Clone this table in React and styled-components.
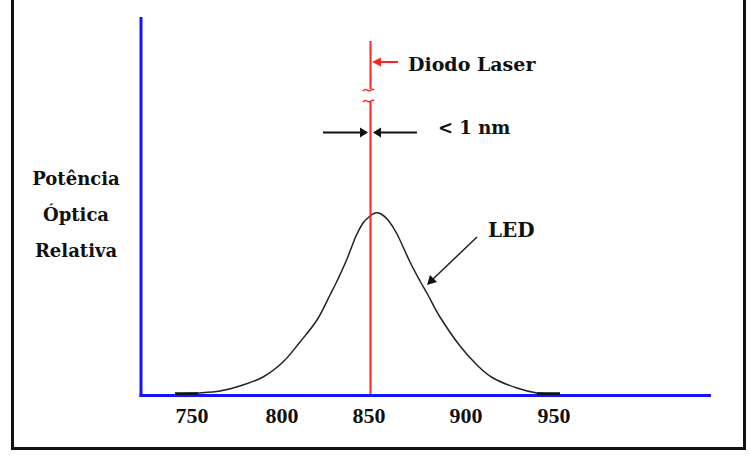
import React from 'react'
import styled, { createGlobalStyle } from 'styled-components'

const GlobalStyle = createGlobalStyle`
  html, body {
    margin: 0;
    padding: 0;
    background: #fff;
  }
`

const Frame = styled.div`
  box-sizing: border-box;
  width: 735px;
  height: 453px;
  margin: -3px 0 0 11px;
  border: 3px solid #111;
  display: flex;
  background: #fff;
`

const AxisTitle = styled.div`
  width: 124px;
  flex: none;
  padding-top: 161px;
  display: flex;
  flex-direction: column;
  align-items: center;
  font-family: 'DejaVu Serif', 'Liberation Serif', serif;
  font-weight: bold;
  font-size: 18px;
  line-height: 36px;
  color: #111;
`

const Chart = styled.svg`
  display: block;
  flex: 1;
  height: 447px;
`

const Label = styled.text`
  font-family: 'DejaVu Serif', 'Liberation Serif', serif;
  font-weight: bold;
  font-size: ${p => p.$size || 19}px;
  fill: #111;
`

const Tick = styled.text`
  font-family: 'Liberation Serif', 'Times New Roman', serif;
  font-weight: bold;
  font-size: 22px;
  fill: #111;
  text-anchor: middle;
`

const BLUE = '#1414ff'
const RED = '#ff2424'

const ticks = [
  { x: 192, label: '750' },
  { x: 282, label: '800' },
  { x: 369, label: '850' },
  { x: 466, label: '900' },
  { x: 554, label: '950' }
]

// pontos lidos da curva do LED
const curve = [
  [175, 394], [198, 393], [220, 391], [240, 386], [263, 377], [283, 362],
  [300, 342], [317, 320], [330, 295], [338, 279], [347, 259], [356, 236],
  [363, 223], [369, 217], [375, 213], [381, 214], [388, 220], [397, 234],
  [410, 262], [420, 281], [428, 295], [440, 317], [460, 346], [477, 365],
  [493, 378], [517, 388], [537, 393], [558, 394]
]

const smooth = pts => {
  let d = `M${pts[0][0]} ${pts[0][1]}`
  for (let i = 0; i < pts.length - 1; i++) {
    const p0 = pts[i - 1] || pts[i]
    const p1 = pts[i]
    const p2 = pts[i + 1]
    const p3 = pts[i + 2] || p2
    const c1x = p1[0] + (p2[0] - p0[0]) / 6
    const c1y = p1[1] + (p2[1] - p0[1]) / 6
    const c2x = p2[0] - (p3[0] - p1[0]) / 6
    const c2y = p2[1] - (p3[1] - p1[1]) / 6
    d += ` C${c1x.toFixed(1)} ${c1y.toFixed(1)} ${c2x.toFixed(1)} ${c2y.toFixed(1)} ${p2[0]} ${p2[1]}`
  }
  return d
}

const App = () => (
  <>
    <GlobalStyle />
    <Frame>
      <AxisTitle>
        <span>Potência</span>
        <span>Óptica</span>
        <span>Relativa</span>
      </AxisTitle>
      <Chart viewBox='138 0 605 447'>
        {/* eixos */}
        <line x1='141' y1='17' x2='141' y2='397' stroke={BLUE} strokeWidth='3' />
        <line x1='139.5' y1='395.5' x2='711' y2='395.5' stroke={BLUE} strokeWidth='3' />

        {/* curva do LED */}
        <path d={smooth(curve)} fill='none' stroke='#222' strokeWidth='1.5' />
        <line x1='175' y1='393.5' x2='198' y2='393.5' stroke='#111' strokeWidth='2.5' />
        <line x1='537' y1='393.5' x2='560' y2='393.5' stroke='#111' strokeWidth='2.5' />

        {/* linha do laser, com corte */}
        <line x1='370.5' y1='41' x2='370.5' y2='89' stroke={RED} strokeWidth='2' />
        <path d='M363 91 q2 -2.5 4 -1 q2 1.5 4 0 q2 -1.5 3 0' fill='none' stroke={RED} strokeWidth='1.5' />
        <path d='M363 102 q2 -2.5 4 -1 q2 1.5 4 0 q2 -1.5 3 0' fill='none' stroke={RED} strokeWidth='1.5' />
        <line x1='370.5' y1='101' x2='370.5' y2='394' stroke={RED} strokeWidth='2' />

        {/* seta Diodo Laser */}
        <line x1='379' y1='62' x2='398' y2='62' stroke={RED} strokeWidth='2' />
        <polygon points='372,62 381,57.5 381,66.5' fill={RED} />
        <Label x='408' y='71'>Diodo Laser</Label>

        {/* largura < 1 nm */}
        <line x1='323' y1='132.5' x2='362' y2='132.5' stroke='#111' strokeWidth='2' />
        <polygon points='368,132.5 360,127.5 360,137.5' fill='#111' />
        <line x1='379' y1='132.5' x2='417' y2='132.5' stroke='#111' strokeWidth='2' />
        <polygon points='373,132.5 381,127.5 381,137.5' fill='#111' />
        <Label x='438' y='134' $size={18}>&lt; 1 nm</Label>

        {/* seta LED */}
        <line x1='477' y1='237' x2='432' y2='280' stroke='#222' strokeWidth='1.5' />
        <polygon points='427,285 430,275 437,282' fill='#111' />
        <Label x='488' y='237' $size={20}>LED</Label>

        {ticks.map(t => (
          <Tick key={t.label} x={t.x} y='423'>{t.label}</Tick>
        ))}
      </Chart>
    </Frame>
  </>
)

export default App
